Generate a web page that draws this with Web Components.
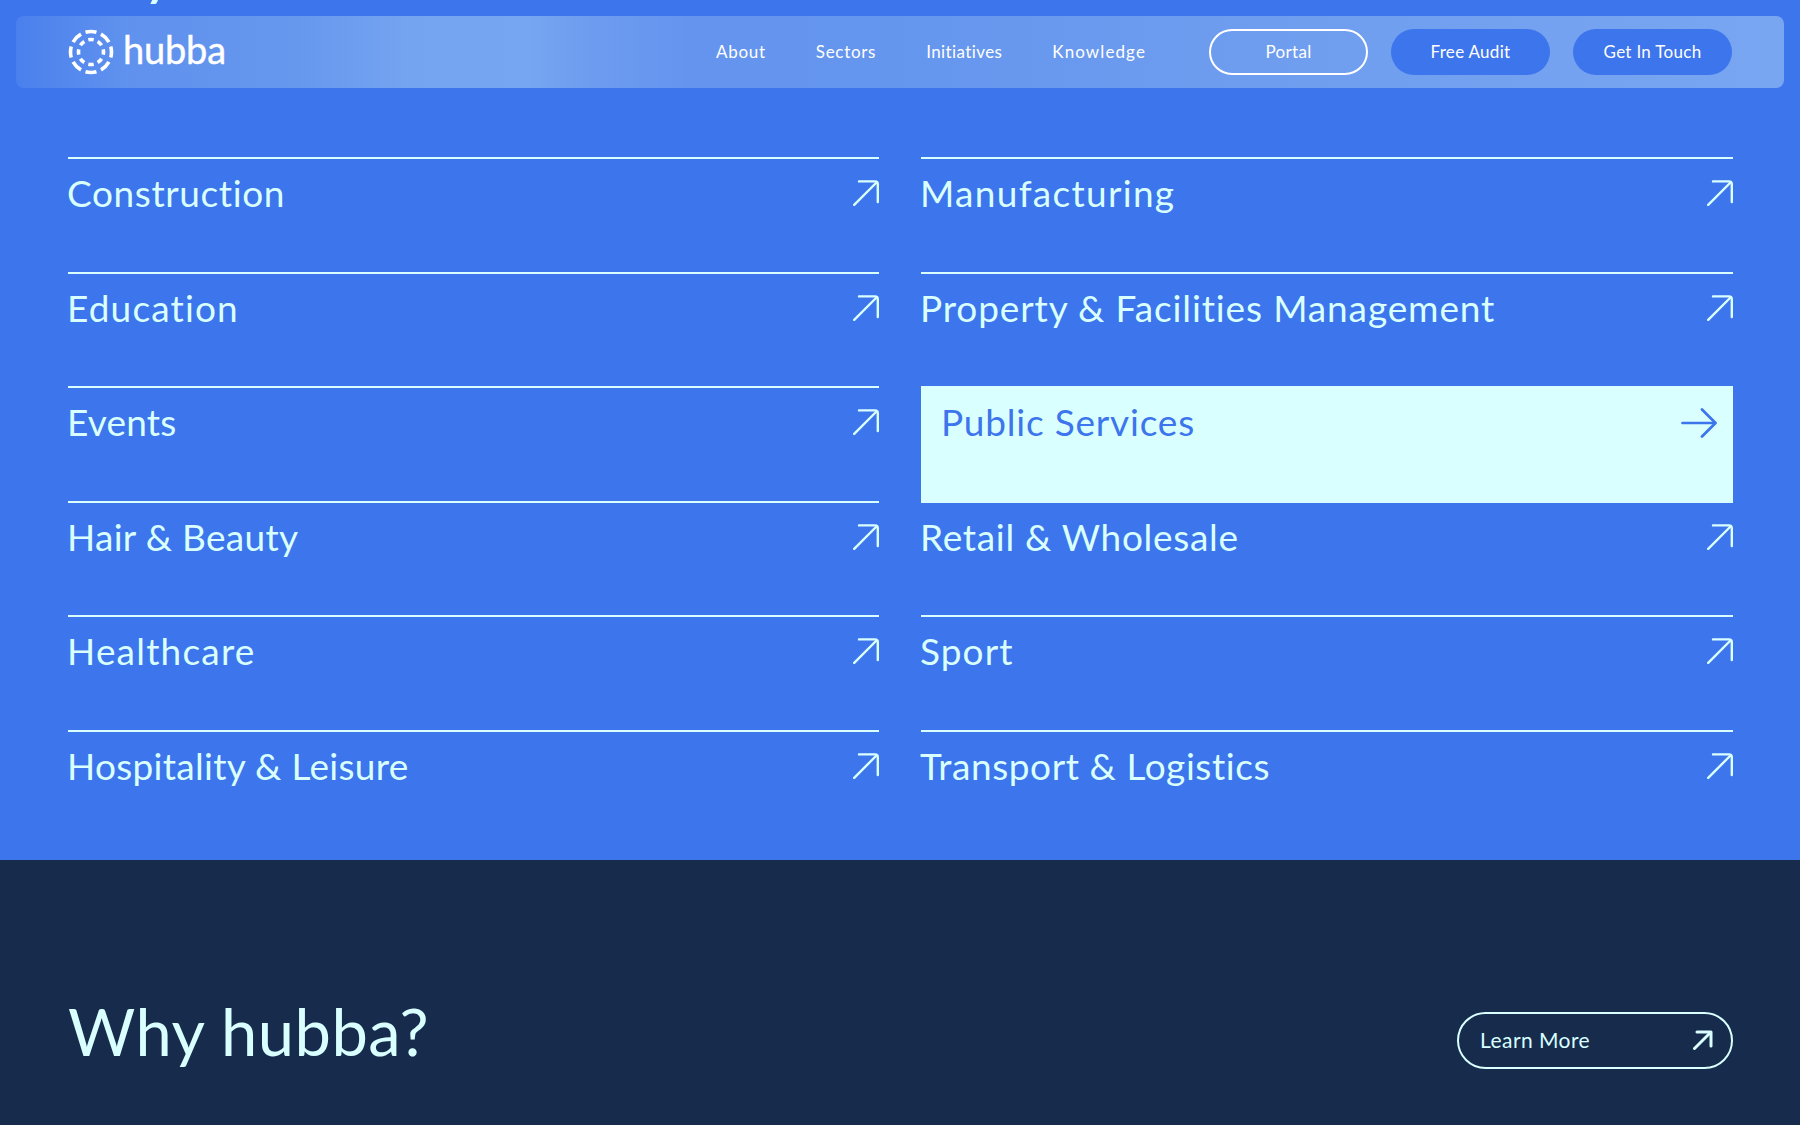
<!DOCTYPE html>
<html lang="en">
<head>
<meta charset="utf-8">
<title>hubba</title>
<style>
  html, body { margin: 0; padding: 0; }
  body { width: 1800px; height: 1125px; overflow: hidden; background: #172b4d; font-family: Lato, "Noto Sans", sans-serif; }
</style>
</head>
<body>
<sectors-section>
  <site-nav slot="nav"></site-nav>
  <sector-row style="--ls:.6px">Construction</sector-row>
  <sector-row style="--ls:1.3px">Manufacturing</sector-row>
  <sector-row style="--ls:1.15px">Education</sector-row>
  <sector-row style="--ls:.87px">Property &amp; Facilities Management</sector-row>
  <sector-row style="--ls:.2px">Events</sector-row>
  <sector-row active style="--ls:.8px">Public Services</sector-row>
  <sector-row style="--ls:.3px">Hair &amp; Beauty</sector-row>
  <sector-row style="--ls:.7px">Retail &amp; Wholesale</sector-row>
  <sector-row style="--ls:1.2px">Healthcare</sector-row>
  <sector-row style="--ls:1.1px">Sport</sector-row>
  <sector-row style="--ls:.3px">Hospitality &amp; Leisure</sector-row>
  <sector-row style="--ls:.56px">Transport &amp; Logistics</sector-row>
</sectors-section>
<why-band></why-band>

<script>
const ARROW_NE = `<svg viewBox="0 0 26 26" width="26" height="26" fill="none" stroke="currentColor" stroke-width="2.4" stroke-linecap="round" stroke-linejoin="round"><path d="M1.2 24.8 L23.5 2.5"/><path d="M6 1.4 H22 Q24.8 1.4 24.8 4.2 V22"/></svg>`;
const ARROW_E = `<svg viewBox="0 0 36 30" width="36" height="30" fill="none" stroke="currentColor" stroke-width="2.7" stroke-linecap="round" stroke-linejoin="round"><path d="M1.5 15 H34"/><path d="M21 1.5 L34.5 15 L21 28.5"/></svg>`;

class SiteNav extends HTMLElement {
  constructor() {
    super();
    this.attachShadow({ mode: 'open' });
  }

  connectedCallback() {
    const links = [['About', 0.7], ['Sectors', 0.7], ['Initiatives', 0.4], ['Knowledge', 1.1]];
    this.shadowRoot.innerHTML = `
      <style>
        :host {
          display: flex;
          align-items: center;
          justify-content: space-between;
          height: 72px;
          padding: 0 52px;
          border-radius: 8px;
          color: #fff;
          background: linear-gradient(90deg, #4a80ed 0, #5f91ee 6%, #6698ee 16%, #74a3f0 22%, #76a5f1 29%, #6c9bef 33%, #6494ee 38%, #6596ee 50%, #6e9def 70%, #79a6f1 100%);
        }
        .logo { display: flex; align-items: center; gap: 9px; }
        .logo svg { display: block; }
        .word { font-size: 38px; font-weight: 400; letter-spacing: -0.2px; line-height: 1; padding-bottom: 6px; -webkit-text-stroke: 0.4px #fff; }
        .right { display: flex; align-items: center; }
        nav { display: flex; gap: 50px; margin-right: 63px; padding-bottom: 2px; }
        nav a { font-size: 17px; color: #fff; text-decoration: none; }
        .btns { display: flex; gap: 23px; }
        .btn {
          box-sizing: border-box;
          width: 159px;
          height: 46px;
          padding-bottom: 2px;
          display: flex;
          align-items: center;
          justify-content: center;
          border-radius: 23px;
          font-size: 17px;
          letter-spacing: 0.3px;
          background: #3d75ec;
        }
        .btn.ghost { background: transparent; border: 2px solid #fff; }
      </style>
      <div class="logo">
        <svg viewBox="0 0 46 46" width="46" height="46" fill="none" stroke="#fff" stroke-width="3.6">
          <circle cx="23" cy="23" r="20.5" pathLength="80" stroke-dasharray="7 3" stroke-dashoffset="3.5"/>
          <circle cx="23" cy="23" r="12.5" pathLength="80" stroke-dasharray="5.6 4.4" stroke-dashoffset="2.8"/>
        </svg>
        <span class="word">hubba</span>
      </div>
      <div class="right">
        <nav>${links.map(([l, ls]) => `<a href="#" style="letter-spacing:${ls}px">${l}</a>`).join('')}</nav>
        <div class="btns">
          <div class="btn ghost">Portal</div>
          <div class="btn">Free Audit</div>
          <div class="btn">Get In Touch</div>
        </div>
      </div>
    `;
  }
}

class SectorRow extends HTMLElement {
  constructor() {
    super();
    this.attachShadow({ mode: 'open' });
  }

  connectedCallback() {
    const active = this.hasAttribute('active');
    this.shadowRoot.innerHTML = `
      <style>
        :host {
          display: flex;
          justify-content: space-between;
          align-items: flex-start;
          box-sizing: border-box;
          height: 114.6px;
          padding-top: 14px;
          border-top: 2px solid #d9ffff;
          color: #d9ffff;
          font-size: 37px;
          line-height: 40px;
          letter-spacing: var(--ls, 0.4px);
          text-indent: -1px;
        }
        :host([active]) {
          background: #d9ffff;
          color: #3d75ec;
          padding: 14px 16px 0 21px;
          height: 116.5px;
          margin-bottom: -1.9px;
          position: relative;
        }
        svg { display: block; margin-top: 7px; }
        :host([active]) svg { margin-top: 6px; }
      </style>
      <slot></slot>
      ${active ? ARROW_E : ARROW_NE}
    `;
  }
}

class SectorsSection extends HTMLElement {
  constructor() {
    super();
    this.attachShadow({ mode: 'open' });
  }

  connectedCallback() {
    this.shadowRoot.innerHTML = `
      <style>
        :host {
          display: block;
          box-sizing: border-box;
          height: 860px;
          padding-top: 16px;
          background: #3d75ec;
          position: relative;
          overflow: hidden;
        }
        .bar { margin: 0 16px; }
        .cut {
          position: absolute;
          left: 142px;
          top: -65px;
          font-size: 66px;
          line-height: 66px;
          color: #d9ffff;
          white-space: nowrap;
        }
        .grid {
          display: grid;
          grid-template-columns: 811px 812px;
          column-gap: 42px;
          margin: 69px 67px 0 68px;
        }
      </style>
      <div class="cut">y</div>
      <div class="bar"><slot name="nav"></slot></div>
      <div class="grid"><slot></slot></div>
    `;
  }
}

class WhyBand extends HTMLElement {
  constructor() {
    super();
    this.attachShadow({ mode: 'open' });
  }

  connectedCallback() {
    this.shadowRoot.innerHTML = `
      <style>
        :host {
          display: flex;
          align-items: center;
          justify-content: space-between;
          box-sizing: border-box;
          height: 265px;
          padding: 82px 67px 0 68px;
          background: #172b4d;
          color: #d9ffff;
        }
        h2 { margin: 0; font-size: 65px; font-weight: 400; line-height: 1; letter-spacing: 0.5px; transform: translateY(-2px); }
        .learn {
          box-sizing: border-box;
          display: flex;
          align-items: center;
          justify-content: space-between;
          width: 276px;
          height: 57px;
          padding: 0 18px 2px 21px;
          border: 2px solid #d9ffff;
          border-radius: 29px;
          font-size: 21px;
          letter-spacing: 0.45px;
          margin-top: 14px;
        }
        svg { display: block; }
      </style>
      <h2>Why hubba?</h2>
      <div class="learn">Learn More
        <svg viewBox="0 0 20 20" width="20" height="20" fill="none" stroke="currentColor" stroke-width="3" stroke-linecap="round" stroke-linejoin="round"><path d="M1.5 18.5 L17.5 2.5"/><path d="M4 2 H18 V16"/></svg>
      </div>
    `;
  }
}

customElements.define('site-nav', SiteNav);
customElements.define('sector-row', SectorRow);
customElements.define('sectors-section', SectorsSection);
customElements.define('why-band', WhyBand);
</script>
</body>
</html>
